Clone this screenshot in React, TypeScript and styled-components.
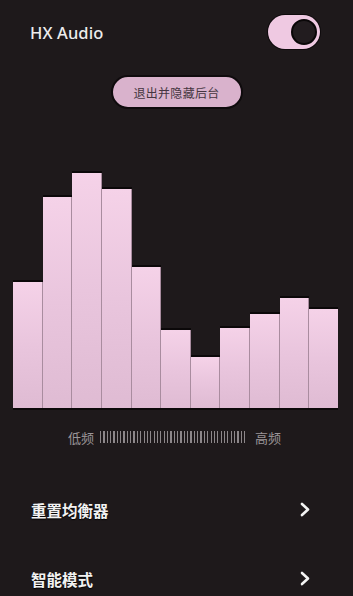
import React from "react";
import styled, { createGlobalStyle } from "styled-components";

const Global = createGlobalStyle`
  html, body { margin: 0; padding: 0; background: #1e191b; }
  body { font-family: "Noto Sans", "Noto Sans CJK SC", sans-serif; }
`;

const Page = styled.div`
  width: 353px;
  height: 596px;
  overflow: hidden;
  background: #1e191b;
  padding-top: 15px;
  box-sizing: border-box;
  display: flex;
  flex-direction: column;
`;

const Header = styled.div`
  display: flex;
  align-items: center;
  justify-content: space-between;
  height: 34px;
  padding: 0 33px 0 30px;
`;

const Title = styled.div`
  color: #ececec;
  font-size: 16.5px;
  font-weight: 500;
  letter-spacing: 0.1px;
`;

const Toggle = styled.div`
  width: 52px;
  height: 34px;
  border-radius: 17px;
  background: #efc9e2;
  box-shadow: 0 0 0 1px #0e0a0c;
  display: flex;
  align-items: center;
  justify-content: flex-end;
  padding-right: 3px;
  box-sizing: border-box;
`;

const Knob = styled.div`
  width: 22px;
  height: 22px;
  border-radius: 50%;
  background: #221c1f;
  border: 2px solid #0a0708;
`;

const ButtonRow = styled.div`
  display: flex;
  justify-content: center;
  margin-top: 26px;
`;

const PillButton = styled.button`
  width: 132px;
  height: 34px;
  border-radius: 17px;
  border: 2px solid #0f0b0d;
  background: #d9b2cc;
  color: #453640;
  font-family: "Noto Sans CJK SC", sans-serif;
  font-size: 12px;
  letter-spacing: 0.3px;
  padding: 0;
`;

const Chart = styled.div`
  margin: 64px 15px 0 13px;
  height: 238px;
  display: flex;
  align-items: flex-end;
  border-bottom: 2px solid #0c090a;
`;

const Bar = styled.div<{ $last?: boolean }>`
  flex: 1;
  background: linear-gradient(180deg, #f5d2e8 0%, #e9c5dd 50%, #dfbbd3 100%);
  box-shadow: 0 -2px 0 #0b0809;
  border-right: ${(p) => (p.$last ? "none" : "1px solid #a98c9f")};
`;

const Scale = styled.div`
  display: flex;
  align-items: center;
  justify-content: center;
  margin-top: 18px;
  height: 18px;
  padding-right: 4px;
`;

const ScaleLabel = styled.span`
  color: #9b9598;
  font-family: "Noto Sans CJK SC", sans-serif;
  font-size: 13px;
`;

const Ticks = styled.div`
  width: 145px;
  height: 12px;
  margin: 0 10px 0 6px;
  background: repeating-linear-gradient(
    90deg,
    #8d878a 0px,
    #8d878a 1.2px,
    transparent 1.2px,
    transparent 3.35px
  );
`;

const Menu = styled.div`
  margin-top: 29px;
  display: flex;
  flex-direction: column;
`;

const MenuRow = styled.div`
  height: 69px;
  display: flex;
  align-items: center;
  justify-content: space-between;
  padding: 0 43px 0 31px;
`;

const MenuText = styled.span`
  color: #f2f2f2;
  font-family: "Noto Sans CJK SC", sans-serif;
  font-size: 15.5px;
  font-weight: 700;
  text-shadow: 0 1px 1px #000;
`;

const Chevron = () => (
  <svg width="10" height="15" viewBox="0 0 10 15">
    <polyline
      points="2,2 8,7.5 2,13"
      fill="none"
      stroke="#f4f4f4"
      strokeWidth="2.6"
      strokeLinecap="round"
      strokeLinejoin="round"
    />
  </svg>
);

const bars = [126, 211, 235, 219, 141, 78, 51, 80, 94, 110, 99];

export default function App() {
  return (
    <>
      <Global />
      <Page>
        <Header>
          <Title>HX Audio</Title>
          <Toggle>
            <Knob />
          </Toggle>
        </Header>
        <ButtonRow>
          <PillButton>退出并隐藏后台</PillButton>
        </ButtonRow>
        <Chart>
          {bars.map((h, i) => (
            <Bar key={i} $last={i === bars.length - 1} style={{ height: h }} />
          ))}
        </Chart>
        <Scale>
          <ScaleLabel>低频</ScaleLabel>
          <Ticks />
          <ScaleLabel>高频</ScaleLabel>
        </Scale>
        <Menu>
          <MenuRow>
            <MenuText>重置均衡器</MenuText>
            <Chevron />
          </MenuRow>
          <MenuRow>
            <MenuText>智能模式</MenuText>
            <Chevron />
          </MenuRow>
        </Menu>
      </Page>
    </>
  );
}
